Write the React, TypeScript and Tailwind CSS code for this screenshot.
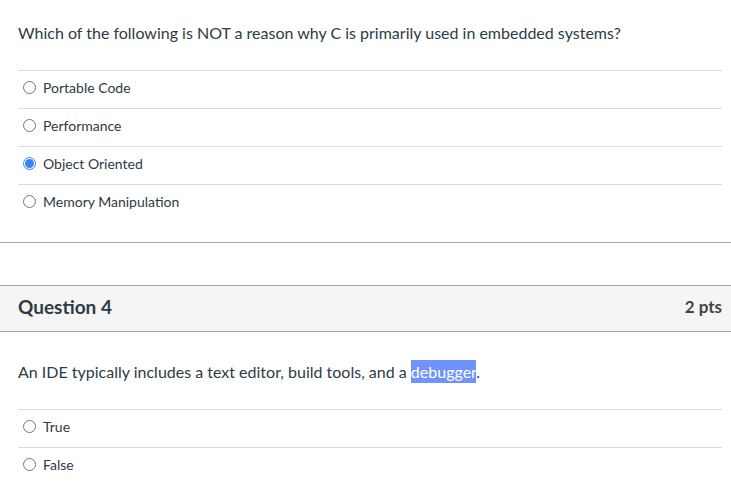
import React from 'react';

type Answer = { label: string; checked?: boolean };

const q3Answers: Answer[] = [
  { label: 'Portable Code' },
  { label: 'Performance' },
  { label: 'Object Oriented', checked: true },
  { label: 'Memory Manipulation' },
];

const q4Answers: Answer[] = [{ label: 'True' }, { label: 'False' }];

function Radio({ checked }: { checked?: boolean }) {
  if (checked) {
    return (
      <span className="flex h-[13px] w-[13px] items-center justify-center rounded-full border border-[#3b82f6] bg-white">
        <span className="h-[9px] w-[9px] rounded-full bg-[#3b82f6]" />
      </span>
    );
  }
  return <span className="h-[13px] w-[13px] rounded-full border border-[#767676] bg-white" />;
}

function AnswerList({ answers }: { answers: Answer[] }) {
  return (
    <div className="mx-[18px] mr-[9px]">
      {answers.map((a) => (
        <div key={a.label} className="flex h-[38px] items-center border-t border-[#dadcdd] pb-[5px] pl-[5px]">
          <Radio checked={a.checked} />
          <span className="ml-[7px] text-[14px] text-[#2d3b45]">{a.label}</span>
        </div>
      ))}
    </div>
  );
}

export default function App() {
  return (
    <div className="h-[488px] w-[731px] overflow-hidden bg-white" style={{ fontFamily: 'Lato, "Open Sans", sans-serif' }}>
      {/* Question 3 body */}
      <div className="pt-[22px]">
        <p className="px-[18px] text-[16px] leading-[22px] text-[#2d3b45]">
          Which of the following is NOT a reason why C is primarily used in embedded systems?
        </p>
        <div className="mt-[26px]">
          <AnswerList answers={q3Answers} />
        </div>
      </div>

      <div className="mt-[20px] border-t border-[#a5a5a5]" />

      {/* Question 4 */}
      <div className="mt-[42px] flex h-[47px] items-center justify-between border-y border-[#a5a5a5] bg-[#f5f5f5] px-[18px] pr-[9px] pb-[3px] text-[#2d3b45]">
        <span className="text-[19px] font-bold">Question 4</span>
        <span className="text-[17px] font-bold text-[#444]">2 pts</span>
      </div>

      <div className="pt-[29px]">
        <p className="px-[18px] text-[16px] leading-[22px] text-[#2d3b45]">
          An IDE typically includes a text editor, build tools, and a{' '}
          <span className="bg-[#7093fb] py-[2px] text-white">debugger</span>.
        </p>
        <div className="mt-[26px]">
          <AnswerList answers={q4Answers} />
        </div>
      </div>
    </div>
  );
}
